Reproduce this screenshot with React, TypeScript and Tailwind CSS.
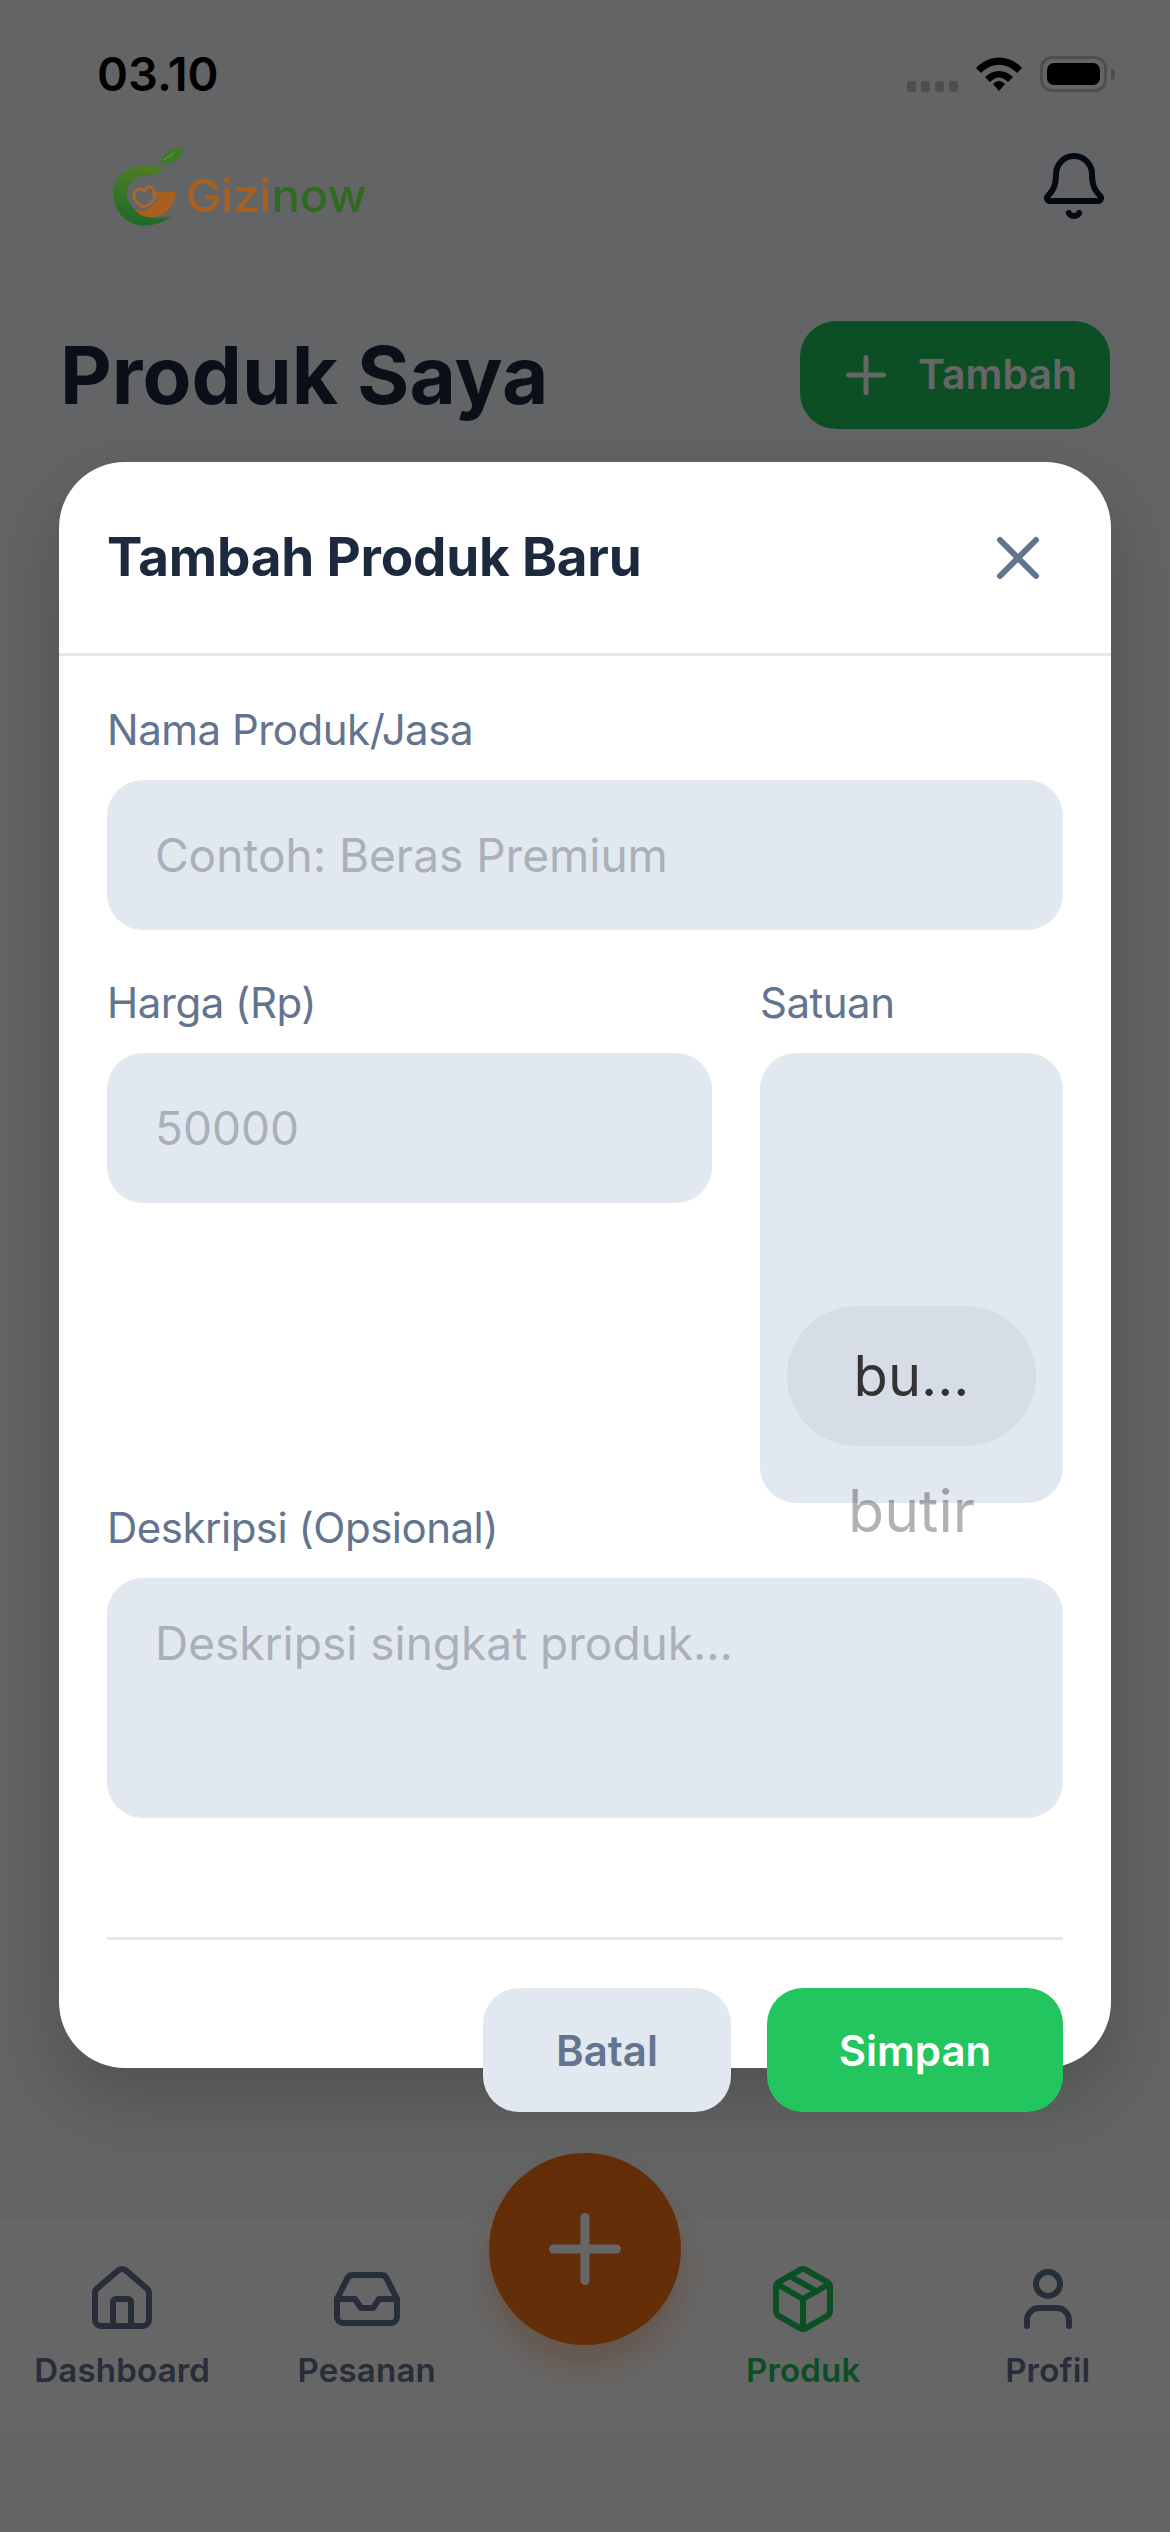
import { Bell, House, Inbox, Package, Plus, User, X } from 'lucide-react';

const tabs = [
    { label: 'Dashboard', icon: House },
    { label: 'Pesanan', icon: Inbox },
    { label: 'Produk', icon: Package, active: true },
    { label: 'Profil', icon: User },
];

function Logo() {
    return (
        <svg width="320" height="120" viewBox="0 0 960 360" className="blur-[0.4px]">
            <defs>
                <linearGradient id="ring" x1="0" y1="0" x2="0" y2="1">
                    <stop offset="0" stopColor="#4f7d26" />
                    <stop offset="1" stopColor="#1d6a26" />
                </linearGradient>
            </defs>
            <g transform="translate(60 60)">
                <path d="M182 68 C185 40 215 22 252 22 C248 50 225 75 190 75 Z" fill="#3f7a28" />
                <path d="M192 60 L225 36" fill="none" stroke="#8aa67a" strokeWidth="2" />
                <path d="M192 88 C150 60 40 75 40 160 C40 220 85 257 130 257 C165 257 195 245 212 228 C175 240 130 235 105 210 C80 185 70 150 95 125 C120 100 165 115 192 88 Z" fill="url(#ring)" />
                <path d="M165 155 H228 C225 200 195 232 150 232 C130 232 115 224 105 208 C125 215 150 210 165 190 L178 174 L165 172 Z" fill="#a8601f" />
                <path d="M130 200 C105 190 95 165 108 152 C118 142 132 148 134 158 C134 145 145 135 155 142 C165 150 158 165 165 175 C155 190 145 200 130 200 Z" fill="none" stroke="#b0662a" strokeWidth="8" />
            </g>
            <text x="318" y="275" fontFamily="Inter, sans-serif" fontSize="134" fontWeight="500" textLength="542" lengthAdjust="spacingAndGlyphs">
                <tspan fill="#a8601f">Gizi</tspan>
                <tspan fill="#2f6a21">now</tspan>
            </text>
        </svg>
    );
}

function Field({ label, placeholder, className }: { label: string; placeholder: string; className?: string }) {
    return (
        <div className={className}>
            <label className="block text-[42px] leading-[60px] tracking-[-0.5px] text-slate-500">{label}</label>
            <input
                placeholder={placeholder}
                className="mt-[20px] block w-full h-[150px] px-[48px] rounded-[36px] bg-slate-200 text-[46px] placeholder:text-[#aab0bb] outline-none"
            />
        </div>
    );
}

function Tab({ label, icon: Icon, active }: { label: string; icon: typeof House; active?: boolean }) {
    return (
        <div className={`flex-1 flex flex-col items-center ${active ? 'text-[#22c55e]' : 'text-slate-500'}`}>
            <Icon size={72} />
            <span className="mt-[11px] text-[33px] leading-[48px] tracking-[0.2px] font-semibold">{label}</span>
        </div>
    );
}

export default function App() {
    return (
        <div className="relative w-[1170px] h-[2532px] overflow-hidden bg-slate-50 font-['Inter',sans-serif]">
            <div className="flex flex-col h-full">
                <div className="flex-1">
                    <div className="flex items-center justify-between h-[148px] pl-[97px] pr-[55px]">
                        <span className="text-[47px] font-semibold text-black">03.10</span>
                        <div className="flex items-center gap-[17px]">
                            <div className="flex gap-[5px] mt-[24px]">
                                <span className="w-[9px] h-[11px] rounded-[3px] bg-[#c2c4c8]" />
                                <span className="w-[9px] h-[11px] rounded-[3px] bg-[#c2c4c8]" />
                                <span className="w-[9px] h-[11px] rounded-[3px] bg-[#c2c4c8]" />
                                <span className="w-[9px] h-[11px] rounded-[3px] bg-[#c2c4c8]" />
                            </div>
                            <svg width="48" height="36" viewBox="0 0 48 36">
                                <path d="M1 12 C14 -2 34 -2 47 12 L42 17 C31 6 17 6 6 17 Z" />
                                <path d="M10 21 C18 13 30 13 38 21 L33 26 C27 20 21 20 15 26 Z" />
                                <path d="M18 28 C22 24 26 24 30 28 L24 35 Z" />
                            </svg>
                            <div className="flex items-center">
                                <div className="w-[67px] h-[36px] p-[4px] rounded-[12px] border-[3px] border-[#c2c4c8]">
                                    <div className="w-full h-full rounded-[7px] bg-black" />
                                </div>
                                <span className="w-[4px] h-[11px] ml-[4px] rounded-r-full bg-[#c2c4c8]" />
                            </div>
                        </div>
                    </div>
                    <div className="flex items-center justify-between h-[96px] -mt-[10px] pl-[80px] pr-[60px]">
                        <div className="relative z-20 -mt-[12px]">
                            <Logo />
                        </div>
                        <Bell size={72} className="text-slate-900" />
                    </div>
                    <div className="flex items-center justify-between h-[108px] mt-[87px] px-[60px]">
                        <h1 className="text-[80px] leading-none font-bold text-slate-800">Produk Saya</h1>
                        <button className="flex items-center gap-[22px] h-[108px] w-[310px] pl-[36px] rounded-[36px] bg-[#22c55e] text-[41px] font-semibold text-white">
                            <Plus size={60} />
                            Tambah
                        </button>
                    </div>
                </div>
                <nav className="flex h-[210px] pt-[43px] mb-[102px] bg-white">
                    {tabs.slice(0, 2).map(t => <Tab key={t.label} {...t} />)}
                    <div className="w-[192px]" />
                    {tabs.slice(2).map(t => <Tab key={t.label} {...t} />)}
                </nav>
            </div>

            <button className="absolute left-[489px] top-[2153px] flex items-center justify-center w-[192px] h-[192px] rounded-full bg-[#f97316] text-white shadow-[0_20px_30px_rgba(249,115,22,0.3)]">
                <Plus size={108} />
            </button>

            <div className="absolute inset-0 z-10 bg-black/60">
                <div className="relative mx-[59px] mt-[462px] h-[1606px] rounded-[66px] bg-white shadow-[0_30px_75px_rgba(0,0,0,0.2)]">
                    <div className="flex items-center justify-between h-[194px] pl-[48px] pr-[57px] border-b-[3px] border-slate-200">
                        <h2 className="text-[53px] tracking-[-0.2px] font-bold text-slate-800">Tambah Produk Baru</h2>
                        <X size={72} className="text-slate-500" />
                    </div>
                    <div className="px-[48px] pt-[44px]">
                        <Field label="Nama Produk/Jasa" placeholder="Contoh: Beras Premium" />
                        <div className="flex gap-[48px] mt-[43px]">
                            <Field label="Harga (Rp)" placeholder="50000" className="flex-1" />
                            <div className="w-[303px]">
                                <label className="block text-[42px] leading-[60px] tracking-[-0.5px] text-slate-500">Satuan</label>
                                <div className="relative mt-[20px] h-[450px] rounded-[36px] bg-slate-200">
                                    <div className="absolute left-[27px] right-[27px] top-[253px] flex items-center justify-center h-[140px] rounded-full bg-[#d7dde6] text-[56px] text-[#333333]">
                                        bu...
                                    </div>
                                    <div className="absolute inset-x-0 top-[424px] text-center text-[59px] leading-[68px] text-black/30">butir</div>
                                </div>
                            </div>
                        </div>
                        <div className="-mt-[5px]">
                            <label className="block text-[42px] leading-[60px] tracking-[-0.5px] text-slate-500">Deskripsi (Opsional)</label>
                            <textarea
                                placeholder="Deskripsi singkat produk..."
                                className="mt-[20px] block w-full h-[240px] px-[48px] py-[36px] rounded-[36px] bg-slate-200 text-[46px] leading-[58px] placeholder:text-[#aab0bb] outline-none resize-none"
                            />
                        </div>
                        <div className="mt-[119px] pt-[48px] border-t-[3px] border-slate-200 flex justify-end gap-[36px]">
                            <button className="w-[248px] h-[124px] rounded-[36px] bg-slate-200 text-[42px] font-semibold text-slate-500">Batal</button>
                            <button className="w-[296px] h-[124px] rounded-[36px] bg-[#22c55e] text-[42px] font-semibold text-white">Simpan</button>
                        </div>
                    </div>
                </div>
            </div>
        </div>
    );
}
